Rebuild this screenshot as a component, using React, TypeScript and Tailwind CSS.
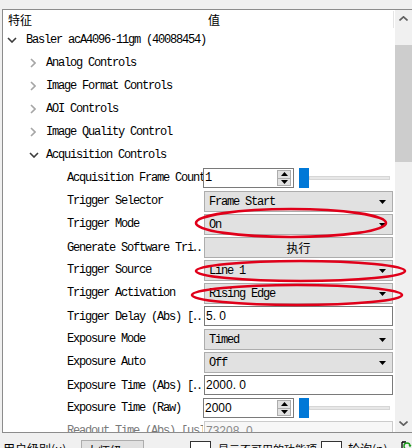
import type { ReactNode } from "react"

const mono = "font-['Liberation_Mono',monospace] text-[12px] tracking-[-1.2px]"
const cjk = "font-['Noto_Sans_CJK_SC',sans-serif]"
const sans = "font-['Liberation_Sans',sans-serif] text-[12px]"

function Open() {
  return (
    <svg width="10" height="6" viewBox="0 0 10 6">
      <polyline points="1,1 5,5 9,1" fill="none" stroke="#3c3c3c" strokeWidth="1.6" />
    </svg>
  )
}

function Closed() {
  return (
    <svg width="6" height="10" viewBox="0 0 6 10">
      <polyline points="1,1 5,5 1,9" fill="none" stroke="#a6a6a6" strokeWidth="1.6" />
    </svg>
  )
}

function Arrow() {
  return (
    <svg width="7" height="4" viewBox="0 0 7 4">
      <polygon points="0,0 7,0 3.5,4" fill="#000" />
    </svg>
  )
}

function Combo({ text }: { text: string }) {
  return (
    <div className={`ml-[1px] w-[189px] h-[21px] flex items-center justify-between pl-[4px] pr-[6px] border border-[#adadad] bg-[#e1e1e1] ${mono}`}>
      <span>{text}</span>
      <Arrow />
    </div>
  )
}

function TextBox({ text, muted }: { text: string; muted?: boolean }) {
  return (
    <div
      className={`ml-[1px] w-[189px] h-[20px] flex items-center pl-[1px] border ${sans} ${
        muted ? "border-[#cccccc] bg-[#f7f7f7] text-[#8a8a8a]" : "border-[#7a7a7a] bg-white text-black"
      }`}
    >
      {text}
    </div>
  )
}

function Spin({ text, font }: { text: string; font: string }) {
  return (
    <div className="flex items-start">
      <div className="w-[91px] h-[20px] flex items-center border border-[#7a7a7a] bg-white">
        <span className={`flex-1 pl-[1px] ${font}`}>{text}</span>
        <div className="w-[14px] h-[16px] mr-[2px] flex flex-col border border-[#adadad] bg-[#e1e1e1]">
          <div className="flex-1 flex items-center justify-center border-b border-[#adadad]">
            <svg width="7" height="4" viewBox="0 0 7 4">
              <polygon points="0,4 7,4 3.5,0" fill="#000" />
            </svg>
          </div>
          <div className="flex-1 flex items-center justify-center">
            <Arrow />
          </div>
        </div>
      </div>
      <div className="ml-[5px] w-[10px] h-[20px] bg-[#0078d7]" />
      <div className="self-center w-[81px] h-[4px] bg-[#e7e7e7] border border-[#d6d6d6]" />
    </div>
  )
}

function Exec() {
  return (
    <div className={`ml-[1px] w-[189px] h-[21px] flex items-center justify-center border border-[#adadad] bg-[#e1e1e1] text-[12px] leading-[16px] ${cjk}`}>
      执行
    </div>
  )
}

const dots = <span className={`${cjk} tracking-normal`}>…</span>

type Row = { level: 0 | 1 | 2; label: ReactNode; open?: boolean; value?: ReactNode; muted?: boolean }

const rows: Row[] = [
  { level: 0, label: "Basler acA4096-11gm (40088454)", open: true },
  { level: 1, label: "Analog Controls", open: false },
  { level: 1, label: "Image Format Controls", open: false },
  { level: 1, label: "AOI Controls", open: false },
  { level: 1, label: "Image Quality Control", open: false },
  { level: 1, label: "Acquisition Controls", open: true },
  { level: 2, label: "Acquisition Frame Count", value: <Spin text="1" font={mono} /> },
  { level: 2, label: "Trigger Selector", value: <Combo text="Frame Start" /> },
  { level: 2, label: "Trigger Mode", value: <Combo text="On" /> },
  { level: 2, label: <>Generate Software Tri{dots}</>, value: <Exec /> },
  { level: 2, label: "Trigger Source", value: <Combo text="Line 1" /> },
  { level: 2, label: "Trigger Activation", value: <Combo text="Rising Edge" /> },
  { level: 2, label: <>Trigger Delay (Abs) [{dots}</>, value: <TextBox text="5. 0" /> },
  { level: 2, label: "Exposure Mode", value: <Combo text="Timed" /> },
  { level: 2, label: "Exposure Auto", value: <Combo text="Off" /> },
  { level: 2, label: <>Exposure Time (Abs) [{dots}</>, value: <TextBox text="2000. 0" /> },
  { level: 2, label: "Exposure Time (Raw)", value: <Spin text="2000" font={sans} /> },
  { level: 2, label: "Readout Time (Abs) [us]", value: <TextBox text="73208. 0" muted />, muted: true },
]

function TreeRow({ row }: { row: Row }) {
  let lead: ReactNode = null
  if (row.level === 0) lead = <div className="pl-[4px] w-[23px] flex-none"><Open /></div>
  else if (row.level === 1)
    lead = row.open ? (
      <div className="pl-[26px] w-[43px] flex-none"><Open /></div>
    ) : (
      <div className="pl-[27px] w-[43px] flex-none flex"><Closed /></div>
    )
  else lead = <div className="w-[64px] flex-none" />

  const width = row.value ? "w-[200px] flex-none overflow-hidden" : "flex-1"

  return (
    <div className="h-[23px] flex-none flex">
      <div className={`${width} flex items-center whitespace-nowrap ${mono} ${row.muted ? "text-[#7a7a7a]" : "text-black"}`}>
        {lead}
        <span>{row.label}</span>
      </div>
      {row.value && <div className="flex-1 pt-[2px]">{row.value}</div>}
    </div>
  )
}

export default function App() {
  return (
    <div className="relative w-[412px] h-[448px] overflow-hidden bg-[#f0f0f0] flex flex-col">
      <div className="h-[9px] flex-none" />

      {/* 特征树 */}
      <div className="ml-[2px] h-[424px] flex-none flex border-t border-l border-b border-[#8c8c8c] bg-white">
        <div className="flex-1 flex flex-col overflow-hidden">
          <div className={`h-[18px] flex-none flex items-center text-[12px] leading-[16px] pt-[1px] ${cjk}`}>
            <div className="w-[205px] pl-[5px]">特征</div>
            <div className="flex-1">值</div>
            <div className="w-px h-full bg-[#e5e5e5] mr-[1px]" />
          </div>
          {rows.map((r, i) => (
            <TreeRow key={i} row={r} />
          ))}
        </div>

        {/* 滚动条 */}
        <div className="w-[17px] flex-none flex flex-col bg-[#f0f0f0]">
          <div className="h-[17px] flex items-center justify-center">
            <svg width="9" height="5" viewBox="0 0 9 5">
              <polyline points="0.5,4.5 4.5,0.8 8.5,4.5" fill="none" stroke="#606060" strokeWidth="1.6" />
            </svg>
          </div>
          <div className="h-[18px]" />
          <div className="h-[117px] bg-[#cdcdcd]" />
          <div className="flex-1" />
          <div className="h-[17px] flex items-center justify-center">
            <svg width="9" height="5" viewBox="0 0 9 5">
              <polyline points="0.5,0.5 4.5,4.2 8.5,0.5" fill="none" stroke="#606060" strokeWidth="1.6" />
            </svg>
          </div>
        </div>
      </div>

      {/* 底部工具栏 */}
      <div className={`flex-1 flex items-start pt-[7px] text-[12px] leading-[16px] text-black ${cjk}`}>
        <span className="ml-[3px] w-[78px] mt-[1px]">用户级别(u)</span>
        <div className="w-[63px] h-[22px] pl-[4px] pt-[2px] border border-[#adadad] bg-[#e1e1e1]">大师级</div>
        <div className="ml-[46px] mt-[1px] w-[21px] h-[14px] border border-[#333333] bg-white" />
        <span className="ml-[7px] w-[103px] mt-[1px] text-[11px]">显示不可用的功能项</span>
        <div className="mt-[1px] w-[21px] h-[14px] border border-[#333333] bg-white" />
        <span className="ml-[6px] w-[53px] mt-[1px]">轮询(p)</span>
        <svg className="mt-[1px]" width="11" height="11" viewBox="0 0 11 11">
          <path d="M1 1 H5 M1 1 V9 H4" fill="none" stroke="#000" strokeWidth="1.3" />
          <path d="M6 8 A3 3 0 1 1 9 5" fill="none" stroke="#1a9a1a" strokeWidth="1.4" />
          <polygon points="7.5,4 10.5,4 9,6.5" fill="#1a9a1a" />
        </svg>
      </div>

      {/* 红色标注 */}
      <svg className="absolute inset-0 pointer-events-none" width="412" height="448" viewBox="0 0 412 448">
        <ellipse cx="291" cy="223" rx="95" ry="14" fill="none" stroke="#e0001a" strokeWidth="2.6" />
        <ellipse cx="300.5" cy="271" rx="104.5" ry="10" fill="none" stroke="#e0001a" strokeWidth="2.6" />
        <ellipse cx="297" cy="295" rx="105" ry="10" fill="none" stroke="#e0001a" strokeWidth="2.6" />
      </svg>
    </div>
  )
}
